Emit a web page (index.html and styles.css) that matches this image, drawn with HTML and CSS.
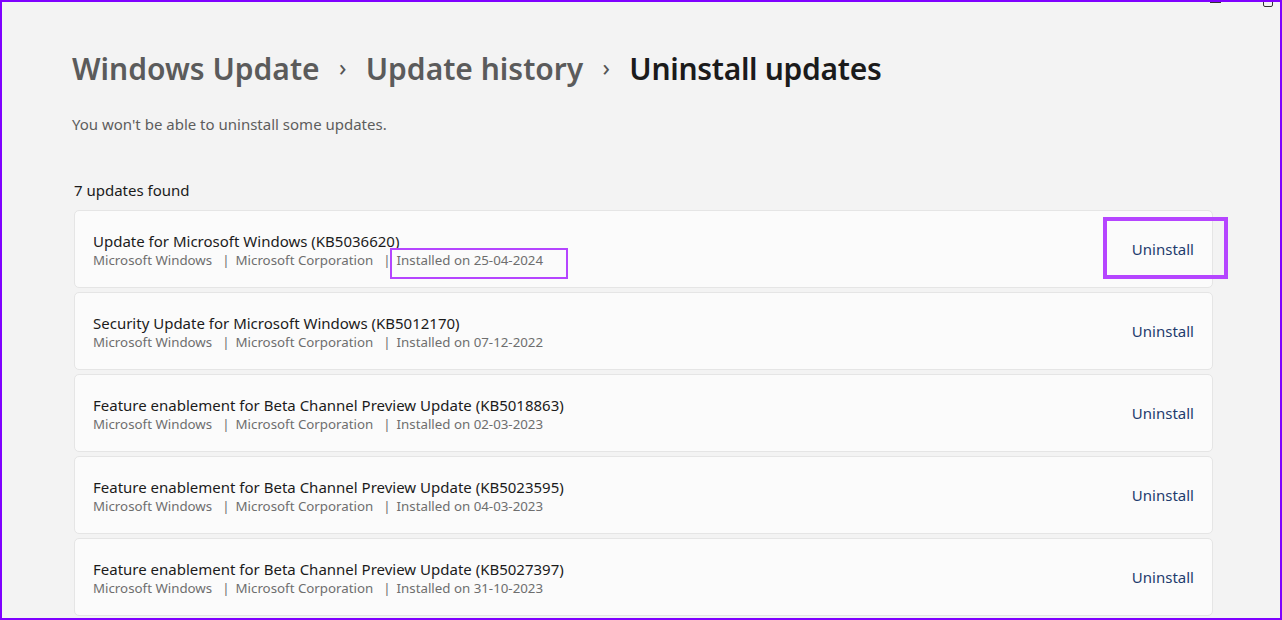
FILE: index.html
```html
<!DOCTYPE html>
<html>
<head>
<meta charset="utf-8">
<link rel="stylesheet" href="styles.css">
</head>
<body>
<div class="frame">
  <div class="caption-icons">
    <span class="min-line"></span>
    <span class="restore-box"></span>
  </div>
  <main class="content">
    <h1 class="crumbs">
      <span class="crumb">Windows Update</span>
      <span class="chev">›</span>
      <span class="crumb">Update history</span>
      <span class="chev">›</span>
      <span class="crumb current">Uninstall updates</span>
    </h1>
    <p class="note">You won't be able to uninstall some updates.</p>
    <p class="count">7 updates found</p>
    <div class="list">
      <div class="card">
        <div class="info">
          <div class="title">Update for Microsoft Windows (KB5036620)</div>
          <div class="meta"><span>Microsoft Windows</span><span class="sep">|</span><span>Microsoft Corporation</span><span class="sep">|</span><span>Installed on 25-04-2024</span></div>
        </div>
        <button class="btn">Uninstall</button>
        <span class="mark mark-btn"></span>
        <span class="mark mark-date"></span>
      </div>
      <div class="card">
        <div class="info">
          <div class="title">Security Update for Microsoft Windows (KB5012170)</div>
          <div class="meta"><span>Microsoft Windows</span><span class="sep">|</span><span>Microsoft Corporation</span><span class="sep">|</span><span>Installed on 07-12-2022</span></div>
        </div>
        <button class="btn">Uninstall</button>
      </div>
      <div class="card">
        <div class="info">
          <div class="title">Feature enablement for Beta Channel Preview Update (KB5018863)</div>
          <div class="meta"><span>Microsoft Windows</span><span class="sep">|</span><span>Microsoft Corporation</span><span class="sep">|</span><span>Installed on 02-03-2023</span></div>
        </div>
        <button class="btn">Uninstall</button>
      </div>
      <div class="card">
        <div class="info">
          <div class="title">Feature enablement for Beta Channel Preview Update (KB5023595)</div>
          <div class="meta"><span>Microsoft Windows</span><span class="sep">|</span><span>Microsoft Corporation</span><span class="sep">|</span><span>Installed on 04-03-2023</span></div>
        </div>
        <button class="btn">Uninstall</button>
      </div>
      <div class="card">
        <div class="info">
          <div class="title">Feature enablement for Beta Channel Preview Update (KB5027397)</div>
          <div class="meta"><span>Microsoft Windows</span><span class="sep">|</span><span>Microsoft Corporation</span><span class="sep">|</span><span>Installed on 31-10-2023</span></div>
        </div>
        <button class="btn">Uninstall</button>
      </div>
    </div>
  </main>
</div>
</body>
</html>
```

FILE: styles.css
```css
* { box-sizing: border-box; }
html, body { margin: 0; padding: 0; }
body {
  font-family: "Noto Sans", "Open Sans", sans-serif;
  background: #f3f3f3;
}
.frame {
  position: relative;
  width: 1282px;
  height: 620px;
  border: 2px solid #7f00ff;
  background: #f3f3f3;
  overflow: hidden;
}
.caption-icons .min-line {
  position: absolute;
  left: 1208px;
  top: 0;
  width: 11px;
  height: 1px;
  background: #333;
}
.caption-icons .restore-box {
  position: absolute;
  left: 1261px;
  top: -5px;
  width: 10px;
  height: 10px;
  border: 1px solid #333;
  border-radius: 2px;
}
.content {
  padding: 46px 0 0 70px;
}
.crumbs {
  margin: 0;
  display: flex;
  align-items: center;
  font-size: 30px;
  font-weight: 600;
  line-height: 42px;
  color: #5b5b5b;
  white-space: nowrap;
}
.crumb.current { color: #1b1b1b; letter-spacing: -0.3px; }
.chev {
  font-size: 24px;
  font-weight: 400;
  color: #555;
  width: 46px;
  text-align: center;
  position: relative;
  top: -2px;
}
.note {
  margin: 24px 0 0;
  font-size: 15px;
  line-height: 20px;
  color: #5d5d5d;
}
.count {
  margin: 46px 0 0 2px;
  font-size: 15px;
  line-height: 20px;
  color: #1b1b1b;
}
.list {
  margin: 10px 0 0 2px;
  width: 1139px;
  display: flex;
  flex-direction: column;
  gap: 4px;
}
.card {
  position: relative;
  height: 78px;
  background: #fbfbfb;
  border: 1px solid #e5e5e5;
  border-radius: 5px;
  display: flex;
  align-items: center;
  justify-content: space-between;
  padding: 0 18px 2px 18px;
}
.info { padding-top: 4px; }
.title {
  font-size: 15px;
  line-height: 19px;
  color: #1b1b1b;
}
.meta {
  font-size: 13.3px;
  line-height: 18px;
  color: #6e6e6e;
}
.sep { margin: 0 6px 0 10px; color: #6e6e6e; }
.btn {
  border: none;
  background: transparent;
  font-family: inherit;
  font-size: 15px;
  color: #1f3c6e;
  padding: 0;
  margin-top: 2px;
  cursor: pointer;
}
.mark {
  position: absolute;
  border-style: solid;
  border-color: #b545ff;
  pointer-events: none;
}
.mark-btn {
  top: 6px;
  right: -16px;
  width: 125px;
  height: 62px;
  border-width: 4px;
}
.mark-date {
  top: 37px;
  left: 315px;
  width: 178px;
  height: 31px;
  border-width: 2px;
}
```
